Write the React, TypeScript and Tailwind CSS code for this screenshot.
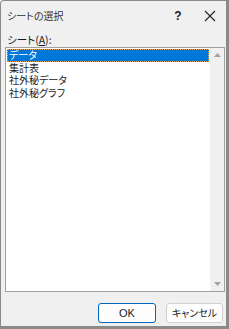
const sheets = ['データ', '集計表', '社外秘データ', '社外秘グラフ'];

export default function App() {
  return (
    <div
      className="w-[229px] h-[329px] flex flex-col bg-[#f0f0f0] border-l border-t border-r-[3px] border-b-[3px] border-[#8a8a8a] rounded-tl-[4px] text-[10.5px] [font-feature-settings:'palt'] text-[#1a1a1a] overflow-hidden"
      style={{ fontFamily: '"Noto Sans CJK JP", "Noto Sans", sans-serif' }}
    >
      {/* title bar */}
      <div className="h-[29px] flex items-center pl-[6px] shrink-0">
        <span className="flex-1 leading-none text-[#333] text-[10px]">シートの選択</span>
        <span className="w-[20px] text-center text-[12px] font-semibold mr-[16px]" style={{ fontFamily: '"Liberation Sans", sans-serif' }}>?</span>
        <svg width="12" height="12" viewBox="0 0 12 12" className="mr-[10px]">
          <path d="M1 1 L11 11 M11 1 L1 11" stroke="#222" strokeWidth="1.1" />
        </svg>
      </div>

      <div className="flex-1 flex flex-col pl-[4px] pr-[1px]">
        <div className="h-[17px] flex items-end pl-[2px] pb-[2px] leading-none">
          シート(<span className="underline">A</span>):
        </div>

        {/* list box */}
        <div className="h-[245px] flex bg-white border border-[#a0a0a0]">
          <div className="flex-1 flex flex-col pt-[1px] pl-[1px] pr-[1px] text-[10px]">
            {sheets.map((s, i) => (
              <div
                key={s}
                className={
                  i === 0
                    ? 'h-[12.5px] flex items-center pl-[1px] bg-[#0078d7] text-white border border-dotted border-[#e7a35a] leading-[10px]'
                    : 'h-[12.5px] flex items-center pl-[2px] leading-[10px]'
                }
              >
                {s}
              </div>
            ))}
          </div>
          <div className="w-[14px] bg-[#f0f0f0] flex flex-col justify-between items-center py-[5px]">
            <svg width="7" height="4" viewBox="0 0 7 4">
              <path d="M0 4 L3.5 0 L7 4 Z" fill="#a3a3a3" />
            </svg>
            <svg width="7" height="4" viewBox="0 0 7 4">
              <path d="M0 0 L3.5 4 L7 0 Z" fill="#a3a3a3" />
            </svg>
          </div>
        </div>

        {/* buttons */}
        <div className="flex justify-end gap-[10px] pt-[11px] pr-[2px]">
          <button className="w-[58px] h-[20px] bg-[#fdfdfd] border border-[#0067c0] rounded-[3px] text-[11px] leading-none" style={{ fontFamily: '"Liberation Sans", sans-serif' }}>
            OK
          </button>
          <button className="w-[57px] h-[20px] bg-[#fdfdfd] border border-[#d0d0d0] rounded-[3px] text-[10px] leading-none whitespace-nowrap">
            キャンセル
          </button>
        </div>
      </div>
    </div>
  );
}
